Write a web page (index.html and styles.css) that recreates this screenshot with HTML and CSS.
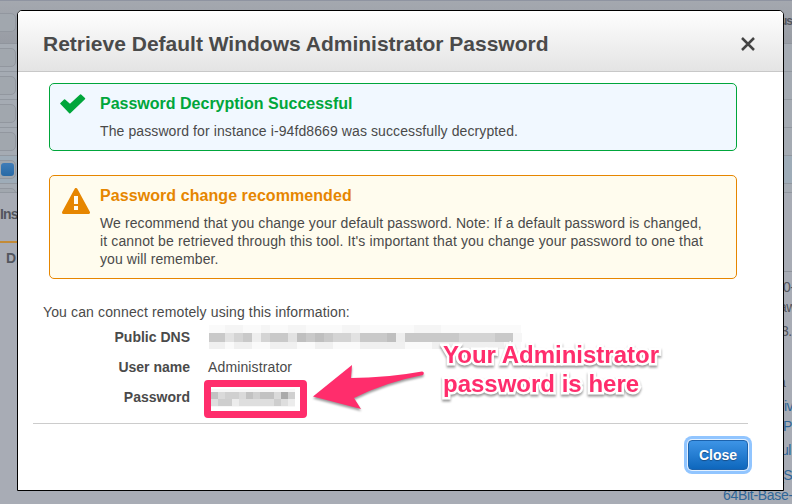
FILE: index.html
```html
<!DOCTYPE html>
<html lang="en">
<head>
<meta charset="utf-8">
<title>Retrieve Default Windows Administrator Password</title>
<link rel="stylesheet" href="styles.css">
</head>
<body>
<div class="page">
  <div class="grid-head"><i class="box"></i><b>us</b></div>
  <div class="grid-row"><i class="box"></i></div>
  <div class="grid-row"><i class="box"></i></div>
  <div class="grid-row"><i class="box"></i></div>
  <div class="grid-row"><i class="box"></i></div>
  <div class="grid-row selected"><i class="box"><i class="tick"></i></i></div>
  <div class="grid-row last"><i class="box"></i></div>
  <div class="details">
    <div class="tabs">
      <b class="ins">Ins</b>
      <b class="tab">D</b>
    </div>
    <div class="facts">
      <span class="l1">0-</span>
      <span class="l2">aw</span>
      <span class="l3">3.</span>
      <span class="l4">a</span>
      <a class="l5">iv</a>
      <a class="l6">P</a>
      <a class="l7">ul</a>
      <a class="l8">_S</a>
      <a class="l9">64Bit-Base-</a>
    </div>
  </div>
</div>

<section class="dialog">
  <header>
    <h1>Retrieve Default Windows Administrator Password</h1>
    <svg class="x" width="14" height="14" viewBox="0 0 14 14"><path d="M1 1L13 13M13 1L1 13"/></svg>
  </header>
  <div class="notice ok">
    <svg width="26" height="20" viewBox="0 0 26 20"><path d="M1 9.5L4.6 6L10 10.8L20.6 1L24.4 4.6L9.8 18.6Z" fill="#00a63b" stroke="#00a63b" stroke-width="1.6" stroke-linejoin="round"/></svg>
    <div>
      <h2>Password Decryption Successful</h2>
      <p>The password for instance i-94fd8669 was successfully decrypted.</p>
    </div>
  </div>
  <div class="notice warn">
    <svg width="28" height="26" viewBox="0 0 28 26"><path d="M14 1.5L26.5 24.5H1.5Z" fill="#e68600" stroke="#e68600" stroke-width="3" stroke-linejoin="round"/><path d="M12 8h4v8h-4zM12 18h4v4h-4z" fill="#fffcee"/></svg>
    <div>
      <h2>Password change recommended</h2>
      <p>We recommend that you change your default password. Note: If a default password is changed,<br><span class="wide">it cannot be retrieved through this tool. It's important that you change your password to one that</span><br>you will remember.</p>
    </div>
  </div>
  <p class="intro">You can connect remotely using this information:</p>
  <dl>
    <dt>Public DNS</dt>
    <dd>
      <svg class="mosaic" width="314" height="24" viewBox="0 0 314 24" shape-rendering="crispEdges">
        <path d="M1 0h312v24H1z" fill="#fafafa"/>
        <path d="M17 0h18v8H17zM53 0h9v8h-9zM80 0h18v8H80zM134 0h18v8h-18zM206 0h27v8h-27z" fill="#f5f5f5"/>
        <path d="M1 17h16v7H1zM26 17h18v7H26zM62 17h27v7H62zM107 17h18v7h-18zM152 17h45v7h-45zM224 17h72v7h-72z" fill="#f0f0f0"/>
        <path d="M1 8h304v9H1z" fill="#d4d4d4"/>
        <path d="M1 8h16v9H1zM35 8h9v9h-9zM62 8h18v9H62zM98 8h9v9h-9zM116 8h9v9h-9zM152 8h27v9h-27zM197 8h18v9h-18zM215 8h36v9h-36zM287 8h18v9h-18z" fill="#c9c9c9"/>
        <path d="M89 8h9v9h-9zM107 8h9v9h-9zM179 8h9v9h-9z" fill="#bfbfbf"/>
        <path d="M17 8h9v9h-9zM80 8h9v9h-9zM143 8h9v9h-9z" fill="#e2e2e2"/>
        <path d="M44 8h9v9h-9zM188 8h9v9h-9z" fill="#eee"/>
        <path d="M305 8h9v9h-9z" fill="#f6f6f6"/>
      </svg>
    </dd>
    <dt>User name</dt>
    <dd>Administrator</dd>
    <dt>Password</dt>
    <dd>
      <svg class="mosaic pw" width="84" height="18" viewBox="0 0 84 18" shape-rendering="crispEdges">
        <path d="M0 0h84v18H0z" fill="#f7f7f7"/>
        <path d="M0 3h84v7H0z" fill="#d0d0d0"/>
        <path d="M7 3h7v7H7zM28 3h7v7h-7zM63 3h7v7h-7z" fill="#dadada"/>
        <path d="M0 3h7v7H0zM35 3h7v7h-7zM49 3h14v7H49z" fill="#c2c2c2"/>
        <path d="M70 3h7v7h-7z" fill="#aaa"/>
        <path d="M0 10h84v7H0z" fill="#dedede"/>
        <path d="M7 10h14v7H7zM63 10h7v7h-7z" fill="#cecece"/>
        <path d="M21 10h7v7h-7zM77 10h7v7h-7z" fill="#ececec"/>
      </svg>
    </dd>
  </dl>
  <footer><button>Close</button></footer>

  <div class="mark-box"></div>
  <svg class="mark-arrow" width="124" height="56" viewBox="0 0 124 56"><path d="M3 33.5L42 2L41 15Q76 15 112 8.5Q115 9 113 12Q76 19 44 35L51 46Z" fill="#ff2d6c"/></svg>
  <div class="mark-text">Your Administrator<br>password is here</div>
</section>
</body>
</html>
```

FILE: styles.css
```css
* { box-sizing: border-box; }
body {
  margin: 0;
  width: 792px;
  height: 504px;
  overflow: hidden;
  position: relative;
  font: 14px/18px "Liberation Sans", Arial, sans-serif;
  color: #4a4a4a;
  background: #a8acb5;
}

/* page behind the dialog */
.page { height: 504px; overflow: hidden; border-top: 1px solid #8f94a1; color: #53565e; }
.grid-head {
  height: 43px;
  display: flex;
  justify-content: space-between;
  padding-top: 12px;
  border-bottom: 1px solid #90959d;
  background: linear-gradient(#a4a8af, #989ca4);
}
.grid-head b { width: 12px; line-height: 17px; font-size: 12px; letter-spacing: -1px; white-space: nowrap; }
.grid-row { height: 28px; padding-top: 4px; border-bottom: 1px solid #9298a0; background: #a5abb3; }
.selected { background: #9eacb8; }
.last { height: 9px; overflow: hidden; }
.box {
  display: block;
  width: 26px;
  height: 19px;
  margin-left: -10px;
  border: 1px solid #92979f;
  border-radius: 5px;
  background: #a1a7ae;
}
.tick { display: block; width: 13px; height: 13px; margin: 2px 0 0 10px; border-radius: 3px; background: linear-gradient(#3f7cb8, #286aa5); }
.details { display: flex; height: 311px; }
.tabs { flex: none; width: 18px; white-space: nowrap; }
.tabs b { display: block; }
.ins { height: 50px; padding-top: 12px; border-bottom: 2px solid #c38b37; letter-spacing: -.8px; }
.tab { padding: 6px 0 0 6px; }
.facts {
  flex: 1;
  display: flex;
  flex-direction: column;
  padding: 86px 0 0 705px;
  white-space: nowrap;
  background: linear-gradient(#8e939b, #8e939b) 0 78px / 100% 1px no-repeat;
}
.facts span, .facts a { flex: none; height: 20px; margin-left: 60px; line-height: 16px; letter-spacing: -.6px; }
.facts a { color: #2f6698; }
.facts .l2 { height: 24px; margin-left: 56px; }
.facts .l3 { height: 51px; margin-left: 58px; }
.facts .l4 { height: 24px; margin-left: 55px; }
.facts .l5 { margin-left: 61px; }
.facts .l6 { height: 24px; }
.facts .l7 { height: 25px; margin-left: 58px; }
.facts .l8 { margin-left: 53px; }
.facts .l9 { margin-left: 0; letter-spacing: -.3px; }

/* dialog */
.dialog {
  position: absolute;
  left: 17px;
  top: 10px;
  width: 767px;
  height: 481px;
  display: flex;
  flex-direction: column;
  border: 1px solid #000;
  border-radius: 5px 5px 0 0;
  background: #fff;
}
header {
  height: 61px;
  flex: none;
  display: flex;
  align-items: center;
  justify-content: space-between;
  padding: 5px 28px 0 25px;
  border-bottom: 1px solid #c8c8c8;
  border-radius: 4px 4px 0 0;
  background: linear-gradient(#fefefe, #e4e4e4);
}
h1 { margin: 0; font-size: 21px; line-height: 24px; white-space: nowrap; }
.x { fill: none; stroke: #444; stroke-width: 2.5; }
.notice { display: flex; flex: none; margin: 0 46px 0 31px; border: 1px solid; border-radius: 5px; white-space: nowrap; }
.notice svg { flex: none; }
.ok { height: 68px; margin-top: 11px; padding: 10px 0 0 10px; gap: 14px; border-color: #00a63b; background: #f1f8ff; color: #00a63b; }
.warn { height: 104px; margin-top: 24px; padding: 10px 0 0 12px; gap: 10px; border-color: #e68600; background: #fffcee; color: #e68600; }
.warn svg { margin-top: 2px; }
.warn h2 { letter-spacing: .07px; }
h2 { margin: 0 0 9px; font-size: 16px; line-height: 19px; }
p { margin: 0; }
.notice p { color: #4a4a4a; letter-spacing: .1px; }
.notice .wide { letter-spacing: .13px; }
.intro { margin: 24px 0 7px 25px; letter-spacing: .13px; }
dl { display: grid; grid-template-columns: 147px 1fr; grid-auto-rows: 30px; column-gap: 18px; margin: 0 0 0 25px; }
dt { font-weight: bold; text-align: right; }
dd { margin: 0; letter-spacing: .13px; }
.mosaic { display: block; margin-top: -3px; }
.pw { margin: 1px 0 0 3px; }
footer { display: flex; justify-content: flex-end; margin: 5px 35px 0 15px; padding-top: 16px; border-top: 1px solid #ccc; }
button {
  width: 60px;
  height: 30px;
  padding: 0;
  border: 1px solid #1c62ac;
  border-radius: 4px;
  background: linear-gradient(#3d94e6, #0e67bd);
  box-shadow: 0 0 0 1px #e4f1ff, 0 0 0 4px #91c5ff;
  color: #fff;
  font: bold 14px/26px "Liberation Sans", Arial, sans-serif;
  text-shadow: 0 1px 1px #174d85;
}

/* annotations laid over the dialog */
.mark-box { position: absolute; left: 186px; top: 369px; width: 103px; height: 38px; border: 7px solid #ff2d6c; border-radius: 4px; }
.mark-arrow { position: absolute; left: 292px; top: 352px; filter: drop-shadow(0 2px 1px #0006); }
.mark-text {
  position: absolute;
  left: 425px;
  top: 329px;
  font: bold 24px/29px "Liberation Sans", Arial, sans-serif;
  color: #ff2d6c;
  white-space: nowrap;
  -webkit-text-stroke: 5px #fff;
  paint-order: stroke fill;
  filter: drop-shadow(0 2px 1px #0006);
}
```
